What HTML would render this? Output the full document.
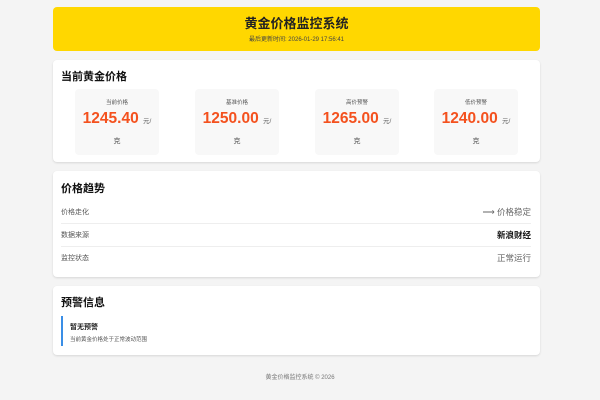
<!DOCTYPE html>
<html><head><meta charset="utf-8"><style>
*{margin:0;padding:0;box-sizing:border-box}
body{width:600px;height:400px;background:#f4f4f4;font-family:"Liberation Sans","Noto Sans CJK SC",sans-serif;position:relative;overflow:hidden}
.hdr{position:absolute;left:53px;top:7px;width:487px;height:44px;background:#ffd700;border-radius:4px;text-align:center}
.hdr h1{font-size:13px;font-weight:bold;color:#222;margin-top:9px;line-height:16px}
.hdr p{font-size:6px;color:#444;margin-top:2px}
.card{position:absolute;left:53px;width:487px;background:#fff;border-radius:4px;box-shadow:0 1px 2px rgba(0,0,0,.12)}
.card h2{position:absolute;left:8px;font-size:11px;font-weight:bold;color:#111}
.box{position:absolute;top:29px;width:84px;height:66px;background:#f8f8f8;border-radius:4px;text-align:center}
.box .t{font-size:5.5px;color:#555;margin-top:9px}
.box .v{font-size:15.5px;font-weight:bold;color:#f4511e;margin-top:4px;line-height:18px}
.box .v span{font-size:6.5px;color:#666;font-weight:normal}
.box .k{font-size:7px;color:#555;margin-top:5px}
.row{position:absolute;left:8px;width:470px;height:23px;font-size:7px;color:#555;line-height:23px}
.row b{position:absolute;right:0;top:0;font-size:8.5px;color:#666;font-weight:normal}
.line{position:absolute;left:8px;width:470px;height:1px;background:#eee}
</style></head><body>
<div class="hdr"><h1>黄金价格监控系统</h1><p>最后更新时间: 2026-01-29 17:56:41</p></div>
<div class="card" style="top:60px;height:102px">
<h2 style="top:8px">当前黄金价格</h2>
<div class="box" style="left:22px"><div class="t">当前价格</div><div class="v">1245.40 <span>元/</span></div><div class="k">克</div></div>
<div class="box" style="left:142px"><div class="t">基准价格</div><div class="v">1250.00 <span>元/</span></div><div class="k">克</div></div>
<div class="box" style="left:262px"><div class="t">高价预警</div><div class="v">1265.00 <span>元/</span></div><div class="k">克</div></div>
<div class="box" style="left:381px"><div class="t">低价预警</div><div class="v">1240.00 <span>元/</span></div><div class="k">克</div></div>
</div>
<div class="card" style="top:171px;height:106px">
<h2 style="top:9px">价格趋势</h2>
<div class="row" style="top:30px">价格走化<b>⟶ 价格稳定</b></div>
<div class="line" style="top:52px"></div>
<div class="row" style="top:53px">数据来源<b style="color:#111;font-weight:bold">新浪财经</b></div>
<div class="line" style="top:75px"></div>
<div class="row" style="top:76px">监控状态<b>正常运行</b></div>
</div>
<div class="card" style="top:286px;height:69px">
<h2 style="top:8px">预警信息</h2>
<div style="position:absolute;left:8px;top:30px;width:470px;height:30px;border-left:2px solid #3a8ee6;padding-left:7px">
<div style="font-size:7px;font-weight:bold;color:#222;margin-top:6px">暂无预警</div>
<div style="font-size:5.5px;color:#555;margin-top:3px">当前黄金价格处于正常波动范围</div>
</div></div>
<div style="position:absolute;top:372px;left:0;width:600px;text-align:center;font-size:6px;color:#777">黄金价格监控系统 © 2026</div>
</body></html>
